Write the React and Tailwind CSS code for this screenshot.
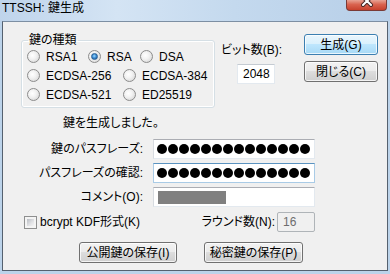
import React from "react";

const font = "font-['Liberation_Sans','Noto_Sans_CJK_JP',sans-serif] [font-feature-settings:'palt']";

function Radio({ label, checked, className = "" }) {
  return (
    <div className={`flex items-center gap-[6px] ${className}`}>
      <span className="w-[13px] h-[13px] rounded-full border border-[#8c8c8c] bg-[radial-gradient(circle_at_40%_40%,#ffffff_0%,#f2f2f2_40%,#cfcfcf_100%)] flex items-center justify-center shrink-0">
        {checked && (
          <span className="w-[7px] h-[7px] rounded-full bg-[radial-gradient(circle_at_45%_40%,#9fdcff_0%,#3f8fd6_45%,#14508f_100%)] border border-[#2a5f93]" />
        )}
      </span>
      <span className="leading-[14px]">{label}</span>
    </div>
  );
}

function Button({ children, primary, className = "" }) {
  return (
    <div
      className={`h-[21px] flex items-center justify-center rounded-[3px] border shadow-[inset_0_0_0_1px_rgba(255,255,255,0.75)] ${
        primary
          ? "border-[#3c7fb1] bg-[linear-gradient(#eaf6fd_0%,#d9f0fc_50%,#bee6fd_50%,#a7d9f5_100%)]"
          : "border-[#707070] bg-[linear-gradient(#f2f2f2_0%,#ebebeb_50%,#dddddd_50%,#cfcfcf_100%)]"
      } ${className}`}
    >
      {children}
    </div>
  );
}

function Dots() {
  return (
    <div className="flex gap-[1px] pl-[3px]">
      {Array.from({ length: 14 }).map((_, i) => (
        <span key={i} className="w-[10px] h-[10px] rounded-full bg-black" />
      ))}
    </div>
  );
}

function Row({ label, children, focused }) {
  return (
    <div className="flex items-center h-[20px]">
      <div className="w-[140px] text-right leading-[14px]">{label}</div>
      <div
        className={`ml-[10px] w-[162px] h-[20px] bg-white border flex items-center ${
          focused
            ? "border-[#a9cbe6] border-t-[#5b93c0]"
            : "border-[#e3e9ef] border-t-[#abadb3] border-l-[#d7dbe0]"
        }`}
      >
        {children}
      </div>
    </div>
  );
}

export default function App() {
  return (
    <div className={`w-[390px] h-[274px] overflow-hidden bg-[#bcd3ea] text-[12px] text-black flex flex-col ${font}`}>
      <div className="h-[21px] shrink-0 flex items-start bg-[linear-gradient(90deg,#bfd4eb_0%,#d4e4f4_30%,#c4d9ee_60%,#b7cfe8_100%)]">
        <span className="pl-[2px] pt-[1px] leading-[15px] text-[12px]">TTSSH: 鍵生成</span>
        <div className="ml-auto mr-[3px] w-[41px] h-[11px] rounded-b-[4px] border border-t-0 border-[#7a3a36] bg-[linear-gradient(#e8a394_0%,#d9634f_45%,#c7412d_100%)] flex justify-center">
          <svg width="14" height="8" viewBox="0 0 14 8">
            <path d="M3 -3 L11 5 M11 -3 L3 5" stroke="#4a2a28" strokeWidth="4" strokeLinecap="round" />
            <path d="M3 -3 L11 5 M11 -3 L3 5" stroke="#ffffff" strokeWidth="2" strokeLinecap="round" />
          </svg>
        </div>
      </div>

      <div className="ml-[2px] w-[386px] h-[250px] shrink-0 border border-[#55616f] border-t-[#7d8fa3] bg-[#f0f0f0] flex flex-col">
        <div className="flex items-start pt-[11px] pl-[18px]">
          <fieldset className="w-[194px] h-[75px] border border-[#d5dfe5] rounded-[3px] shadow-[inset_0_0_0_1px_#ffffff] pl-[5px] pb-[2px]">
            <legend className="ml-[1px] px-[1px] leading-[14px]">鍵の種類</legend>
            <div className="flex h-[19px] items-center">
              <Radio label="RSA1" className="w-[61px]" />
              <Radio label="RSA" checked className="w-[52px]" />
              <Radio label="DSA" />
            </div>
            <div className="flex h-[19px] items-center">
              <Radio label="ECDSA-256" className="w-[96px]" />
              <Radio label="ECDSA-384" />
            </div>
            <div className="flex h-[19px] items-center">
              <Radio label="ECDSA-521" className="w-[96px]" />
              <Radio label="ED25519" />
            </div>
          </fieldset>

          <div className="ml-[6px] w-[80px] pt-[10px] flex flex-col">
            <span className="leading-[14px]">ビット数(B):</span>
            <div className="mt-[7px] ml-[16px] w-[38px] h-[20px] bg-white border border-[#e3e9ef] border-t-[#c5cbd2] flex items-center pl-[5px]">
              2048
            </div>
          </div>

          <div className="ml-[3px] pt-[1px] flex flex-col gap-[6px]">
            <Button primary className="w-[74px]">生成(G)</Button>
            <Button className="w-[74px]">閉じる(C)</Button>
          </div>
        </div>

        <div className="mt-[8px] pl-[60px] leading-[14px]">鍵を生成しました。</div>

        <div className="mt-[9px] flex flex-col gap-[4px]">
          <Row label="鍵のパスフレーズ:">
            <Dots />
          </Row>
          <Row label="パスフレーズの確認:" focused>
            <Dots />
          </Row>
          <Row label="コメント(O):">
            <span className="ml-[4px] w-[68px] h-[13px] bg-[#808080]" />
          </Row>
        </div>

        <div className="mt-[5px] h-[20px] w-[312px] pl-[21px] flex items-center">
          <span className="w-[13px] h-[13px] border border-[#8e8f8f] bg-[#f4f4f4] p-[2px] flex shrink-0">
            <span className="flex-1 bg-[linear-gradient(135deg,#b9bdc3_0%,#e2e3e6_60%,#f4f4f4_100%)]" />
          </span>
          <span className="ml-[3px] leading-[14px]">bcrypt KDF形式(K)</span>
          <span className="ml-auto leading-[14px]">ラウンド数(N):</span>
          <div className="ml-[2px] w-[38px] h-[20px] rounded-[2px] border border-[#afb4b8] bg-[#f0f0f0] text-[#6d6d6d] flex items-center pl-[5px]">
            16
          </div>
        </div>

        <div className="mt-[10px] pl-[76px] flex gap-[27px]">
          <Button className="w-[98px]">公開鍵の保存(I)</Button>
          <Button className="w-[99px]">秘密鍵の保存(P)</Button>
        </div>
      </div>
    </div>
  );
}
